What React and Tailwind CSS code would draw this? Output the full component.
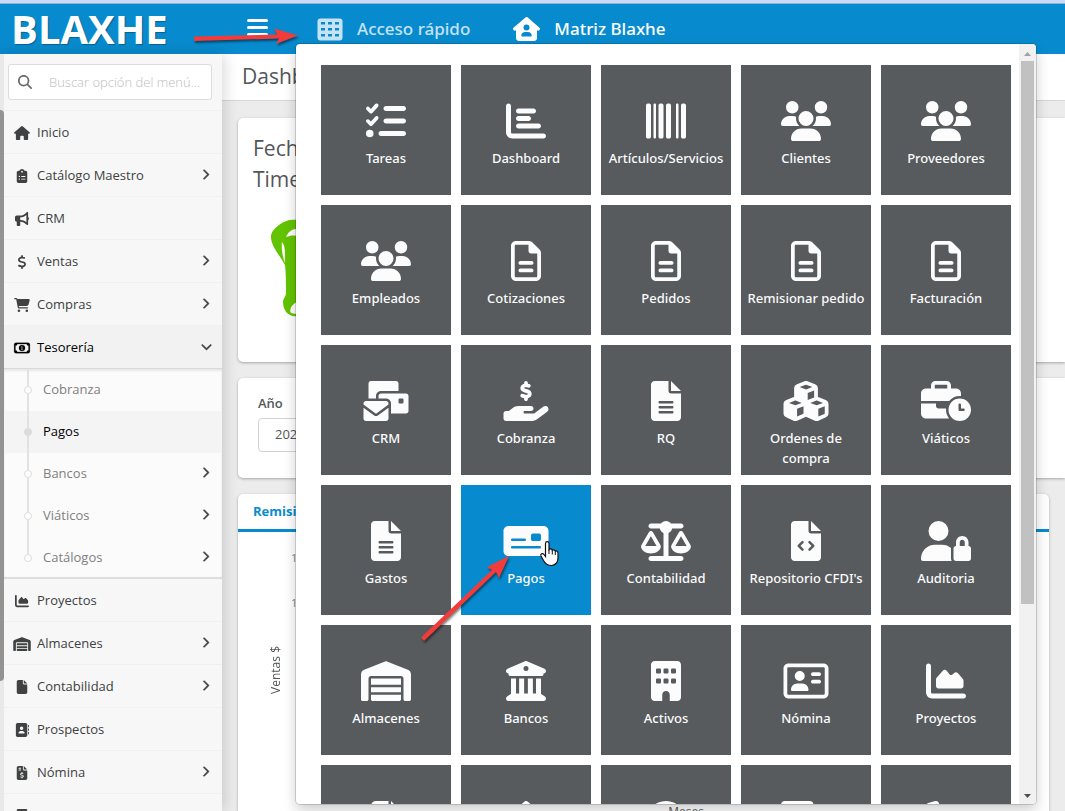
import React from "react";
import {
  FaListCheck, FaChartBar, FaBarcode, FaUsers, FaRegFileLines, FaEnvelopesBulk, FaHandHoldingDollar,
  FaCubes, FaBusinessTime, FaMoneyCheck, FaScaleBalanced, FaUserLock, FaWarehouse, FaBuildingColumns,
  FaBuilding, FaRegAddressCard, FaChartArea, FaHouse, FaClipboardList, FaBullhorn, FaDollarSign,
  FaCartShopping, FaRegMoneyBill1, FaFile, FaAddressBook, FaFileInvoiceDollar, FaMagnifyingGlass,
  FaChevronRight, FaChevronDown, FaHouseUser, FaCircleUser, FaTruck, FaPhone,
} from "react-icons/fa6";

const FILE_BODY =
  "M256 0v128h128L256 0zM224 128L224 0H48C21.49 0 0 21.49 0 48v416C0 490.5 21.49 512 48 512h288c26.51 0 48-21.49 48-48V160h-127.1C238.3 160 224 145.7 224 128z";

function FileLines(props) {
  return (
    <svg viewBox="0 0 384 512" fill="currentColor" {...props}>
      <path d={FILE_BODY + "M272 416h-160C103.2 416 96 408.8 96 400C96 391.2 103.2 384 112 384h160c8.836 0 16 7.162 16 16C288 408.8 280.8 416 272 416zM272 352h-160C103.2 352 96 344.8 96 336C96 327.2 103.2 320 112 320h160c8.836 0 16 7.162 16 16C288 344.8 280.8 352 272 352zM288 272C288 280.8 280.8 288 272 288h-160C103.2 288 96 280.8 96 272C96 263.2 103.2 256 112 256h160C280.8 256 288 263.2 288 272z"} fillRule="evenodd" />
    </svg>
  );
}

function FileCode(props) {
  return (
    <svg viewBox="0 0 384 512" fill="currentColor" {...props}>
      <path d={FILE_BODY} />
      <path d="M147 270L99 318l48 48M237 270l48 48-48 48" fill="none" className="stroke-[#575b5e]" strokeWidth="32" strokeLinecap="round" strokeLinejoin="round" />
    </svg>
  );
}

function GridIcon(props) {
  return (
    <svg viewBox="0 0 26 23" {...props}>
      <rect x="0.500" y="0.500" width="25" height="22" rx="3" fill="currentColor" />
      {[4, 10, 16].map((y, r) =>
        [4, 11, 18].map((x) => <rect key={x + "-" + r} x={x} y={y} width="4" height="2.500" fill="#088bce" />)
      )}
    </svg>
  );
}

const tiles = [
  ["Tareas", FaListCheck], ["Dashboard", FaChartBar], ["Artículos/Servicios", FaBarcode], ["Clientes", FaUsers], ["Proveedores", FaUsers],
  ["Empleados", FaUsers], ["Cotizaciones", FaRegFileLines], ["Pedidos", FaRegFileLines], ["Remisionar pedido", FaRegFileLines], ["Facturación", FaRegFileLines],
  ["CRM", FaEnvelopesBulk], ["Cobranza", FaHandHoldingDollar], ["RQ", FileLines], ["Ordenes de compra", FaCubes], ["Viáticos", FaBusinessTime],
  ["Gastos", FileLines], ["Pagos", FaMoneyCheck], ["Contabilidad", FaScaleBalanced], ["Repositorio CFDI's", FileCode], ["Auditoria", FaUserLock],
  ["Almacenes", FaWarehouse], ["Bancos", FaBuildingColumns], ["Activos", FaBuilding], ["Nómina", FaRegAddressCard], ["Proyectos", FaChartArea],
  ["", FaFile], ["", FaHouse], ["", FaCircleUser], ["", FaTruck], ["", FaPhone],
];

const before = [
  ["Inicio", FaHouse, false], ["Catálogo Maestro", FaClipboardList, true], ["CRM", FaBullhorn, false],
  ["Ventas", FaDollarSign, true], ["Compras", FaCartShopping, true],
];
const sub = [["Cobranza", false], ["Pagos", false], ["Bancos", true], ["Viáticos", true], ["Catálogos", true]];
const after = [
  ["Proyectos", FaChartArea, false], ["Almacenes", FaWarehouse, true], ["Contabilidad", FaFile, true],
  ["Prospectos", FaAddressBook, false], ["Nómina", FaFileInvoiceDollar, true], ["Activos", FaBuilding, false],
];

function Arrow() {
  return <FaChevronRight stroke="currentColor" strokeWidth="24" className="mb-1 size-[11px] text-[#404142]" />;
}

function MenuItem({ label, Icon, arrow }) {
  return (
    <li className="border-b border-[#f0f0f0]">
      <a href="#" className="flex h-[42px] items-center pt-[2px] pr-[11px] pl-2 text-[#404142]">
        <Icon className="h-[14px] w-5" />
        <span className="ml-[5px] flex-1">{label}</span>
        {arrow && <Arrow />}
      </a>
    </li>
  );
}

function Sidebar() {
  return (
    <nav className="z-10 flex w-[222px] shrink-0 bg-[#f7f7f7] text-[13px] shadow-[2px_0_14px_rgba(0,0,0,0.16)]">
      <div className="w-1 shrink-0 bg-[#e9e9e9] pt-14">
        <div className="h-[571px] rounded-r-sm bg-[#959391]" />
      </div>
      <div className="min-w-0 flex-1">
        <div className="border-b border-[#f0f0f0] px-1 py-[10px]">
          <label className="mr-[6px] flex h-9 items-center rounded-[3px] border border-[#dcdcdc] bg-white pl-[9px]">
            <FaMagnifyingGlass className="size-[14px] shrink-0 text-[#6b6b6b]" />
            <input aria-label="Buscar" placeholder="Buscar opción del menú..." className="ml-[17px] w-full min-w-0 bg-transparent pt-[2px] text-[13px] font-light outline-none placeholder:text-[#bdbdbd]" />
          </label>
        </div>
        <ul>
          {before.map(([l, I, a]) => <MenuItem key={l} label={l} Icon={I} arrow={a} />)}
          <li>
            <a href="#" className="flex h-[42px] items-center bg-[#f2f2f2] pt-[2px] pr-[10px] pl-2 text-black">
              <FaRegMoneyBill1 stroke="currentColor" strokeWidth="8" className="h-[14px] w-5" />
              <span className="ml-[5px] flex-1">Tesorería</span>
              <FaChevronDown stroke="currentColor" strokeWidth="24" className="mb-1 size-[11px] text-[#404142]" />
            </a>
            <ul className="border-t border-[#d8d8d8] bg-[#fbfbfb] shadow-[inset_0_2px_2px_rgba(0,0,0,0.08),inset_0_-2px_1px_rgba(0,0,0,0.12)]">
              {sub.map(([l, a], i) => (
                <li key={l}>
                  <a href="#" className={"flex h-[42px] items-center pl-5 pr-[11px] " + (i === 1 ? "bg-[#f4f4f4] text-black" : "text-[#808080]")}>
                    <span className="flex h-full w-2 flex-col items-center">
                      <span className="w-[2px] flex-1 bg-[#e2e2e2]" />
                      <span className={"size-2 rounded-full border border-[#dcdcdc] " + (i === 1 ? "bg-[#dcdcdc]" : "bg-white")} />
                      <span className={"w-[2px] flex-1 " + (i === 4 ? "" : "bg-[#e2e2e2]")} />
                    </span>
                    <span className="ml-[11px] flex-1">{l}</span>
                    {a && <Arrow />}
                  </a>
                </li>
              ))}
            </ul>
          </li>
          {after.map(([l, I, a]) => <MenuItem key={l} label={l} Icon={I} arrow={a} />)}
        </ul>
      </div>
    </nav>
  );
}

function QuickAccess() {
  return (
    <div className="absolute top-11 bottom-[7px] left-[296px] z-20 flex w-[740px] overflow-hidden rounded-[4px] bg-white shadow-[0_0_0_1px_rgba(0,0,0,0.15),0_6px_14px_rgba(0,0,0,0.2)]">
      <div className="flex-1 overflow-hidden pt-[21px] pl-[25px]">
        <div className="grid grid-cols-[repeat(5,130px)] gap-[10px]">
          {tiles.map(([label, Icon], i) => (
            <button key={i} type="button" aria-label={label || "Acceso"} className={"flex h-[130px] flex-col items-center px-1 pt-9 font-['Noto_Sans','Open_Sans',sans-serif] text-[13px] leading-5 font-medium text-[#fcfcfc] " + (label === "Pagos" ? "bg-[#088bce]" : "bg-[#575b5e]")}>
              <Icon className="h-10 w-[50px] shrink-0" />
              <span className="mt-[7px] max-w-[118px] text-center">{label}</span>
            </button>
          ))}
        </div>
      </div>
      <div className="flex w-[17px] flex-col items-center bg-[#f1f1f1]">
        <svg viewBox="0 0 17 17" className="size-[17px]"><path d="M8.500 8L12 12H5z" fill="#a0a0a0" /></svg>
        <div className="w-[13px] grow-[543] bg-[#c1c1c1]" />
        <div className="grow-[183]" />
        <svg viewBox="0 0 17 17" className="size-[17px]"><path d="M8.500 11L12 7H5z" fill="#505050" /></svg>
      </div>
    </div>
  );
}

export default function App() {
  return (
    <div className="relative flex h-screen flex-col overflow-hidden bg-[#ececec] font-['Open_Sans','Noto_Sans',sans-serif] text-[#545759]">
      <div className="h-1 shrink-0 border-b border-[#8fb0d8] bg-[#c9daf5]" />
      <header className="flex h-[50px] shrink-0 items-center bg-[#088bce] text-white">
        <div className="w-[247px] pl-[11px] text-[40px] leading-[50px] font-bold [text-shadow:1px_1px_1px_rgba(0,0,0,0.3)]">BLAXHE</div>
        <button type="button" aria-label="Menú" className="mb-1 flex w-[21px] flex-col gap-1">
          <span className="h-[3px] rounded bg-white" />
          <span className="h-[3px] rounded bg-white" />
          <span className="h-[3px] rounded bg-white" />
        </button>
        <button type="button" className="ml-[49px] flex items-center gap-[14px] font-['Noto_Sans','Open_Sans',sans-serif] text-[17px] font-medium text-[#c5e3f4]">
          <GridIcon className="h-[23px] w-[26px]" />
          Acceso rápido
        </button>
        <button type="button" className="ml-[43px] flex items-center gap-[14px] font-['Noto_Sans','Open_Sans',sans-serif] text-[17px] font-medium">
          <FaHouseUser className="h-6 w-[27px]" />
          Matriz Blaxhe
        </button>
      </header>
      <div className="flex min-h-0 flex-1">
        <Sidebar />
        <main className="min-w-0 flex-1 overflow-hidden">
          <div className="flex h-[47px] items-center border-b border-[#d6d6d6] bg-white pl-5">
            <h1 className="text-[21px]">Dashboard</h1>
          </div>
          <div className="flex flex-col gap-4 pt-[17px] pl-4">
            <section className="h-[244px] rounded-l-[5px] bg-white pt-[15px] pl-[15px] shadow-[0_1px_3px_rgba(0,0,0,0.3)]">
              <p className="w-[120px] text-[21px] leading-[31px]">Fecha Timeout</p>
              <svg viewBox="0 0 60 100" className="mt-6 ml-4 h-[100px] w-[60px]">
                <path d="M28 1C21 0 15 2 10 6 5 10 2 13 2 18c0 9 8 17 14 28 1 8 1 18 1 28 0 4-3 5-3 9 0 5 2 8 3 10 3 3 7 5 11 4h30V1z" fill="#62c400" />
                <path d="M17 18c2-5 6-8 10-8h5v7h-4c-5-1-7 0-11 1zM13 23c2 2 3 6 3 12v9c-2-5-4-14-3-21zM26 84c-4 3-6 7-4 10l10 2V82z" fill="#fff" />
              </svg>
            </section>
            <section className="h-[100px] rounded-l-[5px] bg-white pt-[15px] pl-5 shadow-[0_1px_3px_rgba(0,0,0,0.3)]">
              <label htmlFor="year" className="block text-[13px] leading-5 font-semibold">Año</label>
              <select id="year" className="mt-[5px] h-[34px] w-[120px] appearance-none rounded-[4px] border border-[#d2d2d2] bg-white pl-4 text-[13px]">
                <option>2024</option>
              </select>
            </section>
            <section className="mr-4 h-[400px] rounded-[5px] bg-white shadow-[0_1px_3px_rgba(0,0,0,0.3)]">
              <div className="flex h-[38px] items-center border-b-[3px] border-[#088bce] pl-[15px] text-[13px] font-bold text-[#088bce]">Remisiones</div>
              <div className="flex h-[272px] pl-[30px] text-[11px]">
                <span className="mt-1 self-center text-[12px] leading-4 [writing-mode:vertical-rl] rotate-180">Ventas $</span>
                <div className="ml-[7px] flex flex-col gap-[28px] pt-[18px] text-[#888]">
                  <span>15,000</span>
                  <span>10,000</span>
                </div>
              </div>
              <p className="pl-[85px] text-center text-[12px] leading-4">Meses</p>
            </section>
          </div>
        </main>
      </div>
      <QuickAccess />
      <svg className="pointer-events-none absolute top-0 left-0 z-30 h-[811px] w-[1065px]" viewBox="0 0 1065 811">
        <g className="drop-shadow-[1px_2px_1px_rgba(0,0,0,0.5)]" fill="#f23c3c">
          <path d="M194 36.500L277 34.500L274 28.500L298 35.500L276 44L279 38.500L194 41z" />
          <path d="M421 637.500L492 570L487 567L509 556L499 578L496 572L424 641z" />
        </g>
        <path d="M545.500 543.500c0-2.500 3.500-2.500 3.500 0v6c1-1 3-.8 3.300.8 1-.9 2.700-.5 3 .9 1-.7 2.700 0 2.700 1.800v5c0 4-2.500 7.500-6.500 7.500-4.500 0-6.500-2-8-5l-2.500-4.500c-1-2 1.500-3.500 3-1.500l1.500 2z" fill="#fff" stroke="#111" strokeWidth="1.200" />
        <path d="M549 549.500v4.500M552.300 550.500v4M555.300 551.500v3.500" stroke="#111" strokeWidth="1" />
      </svg>
    </div>
  );
}
